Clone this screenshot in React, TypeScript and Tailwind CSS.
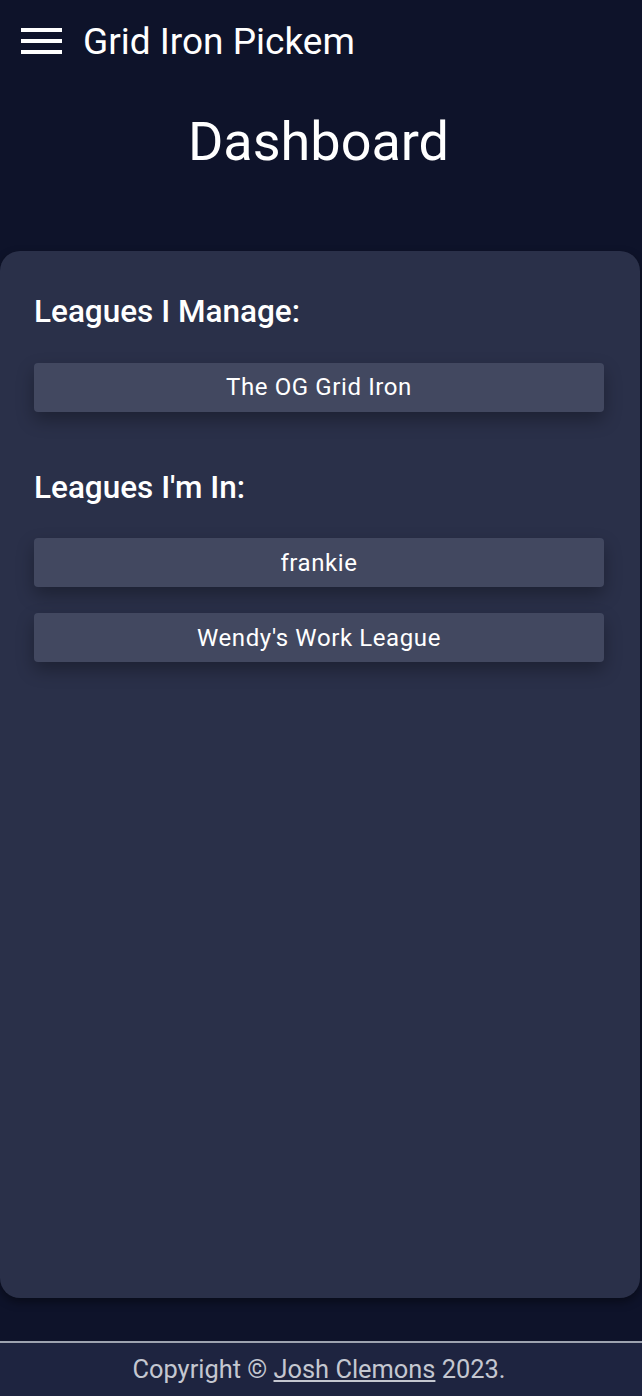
const managed = ["The OG Grid Iron"];
const joined = ["frankie", "Wendy's Work League"];

function LeagueButton({ name }: { name: string }) {
  return (
    <button className="w-full h-[49px] rounded-[4px] bg-[#424860] text-white text-[24px] tracking-[0.6px] shadow-[0_8px_18px_rgba(0,0,0,0.3)]">
      {name}
    </button>
  );
}

export default function App() {
  return (
    <div className="min-h-[1396px] flex flex-col bg-[#0e132a] text-white font-['Roboto',sans-serif]">
      <header className="h-[84px] flex items-center px-[21px] gap-[21px] pb-[2px]">
        <div className="flex flex-col gap-[7px] w-[41px]">
          <span className="h-[4px] bg-white block" />
          <span className="h-[4px] bg-white block" />
          <span className="h-[4px] bg-white block" />
        </div>
        <span className="text-[37px] leading-none">Grid Iron Pickem</span>
      </header>

      <h1 className="text-center text-[54px] leading-none mt-[31px] mb-[82px] pr-[5px]">Dashboard</h1>

      <main className="w-[640px] h-[1047px] rounded-[20px] bg-[#2a3049] shadow-[0_4px_10px_rgba(0,0,0,0.4)] pl-[34px] pr-[36px] pt-[45px]">
        <h2 className="text-[31.5px] font-medium leading-none mb-[35px]">Leagues I Manage:</h2>
        <div className="flex flex-col gap-[26px]">
          {managed.map((l) => (
            <LeagueButton key={l} name={l} />
          ))}
        </div>
        <h2 className="text-[31.5px] font-medium leading-none mt-[60px] mb-[35px]">Leagues I'm In:</h2>
        <div className="flex flex-col gap-[26px]">
          {joined.map((l) => (
            <LeagueButton key={l} name={l} />
          ))}
        </div>
      </main>

      <div className="flex-1" />

      <footer className="h-[55px] border-t-2 border-[#9ea3b0] bg-[#1e2440] flex items-center justify-center pr-[4px] text-[25.4px] text-[#c4c7d0]">
        <span>
          Copyright © <a className="underline">Josh Clemons</a> 2023.
        </span>
      </footer>
    </div>
  );
}
